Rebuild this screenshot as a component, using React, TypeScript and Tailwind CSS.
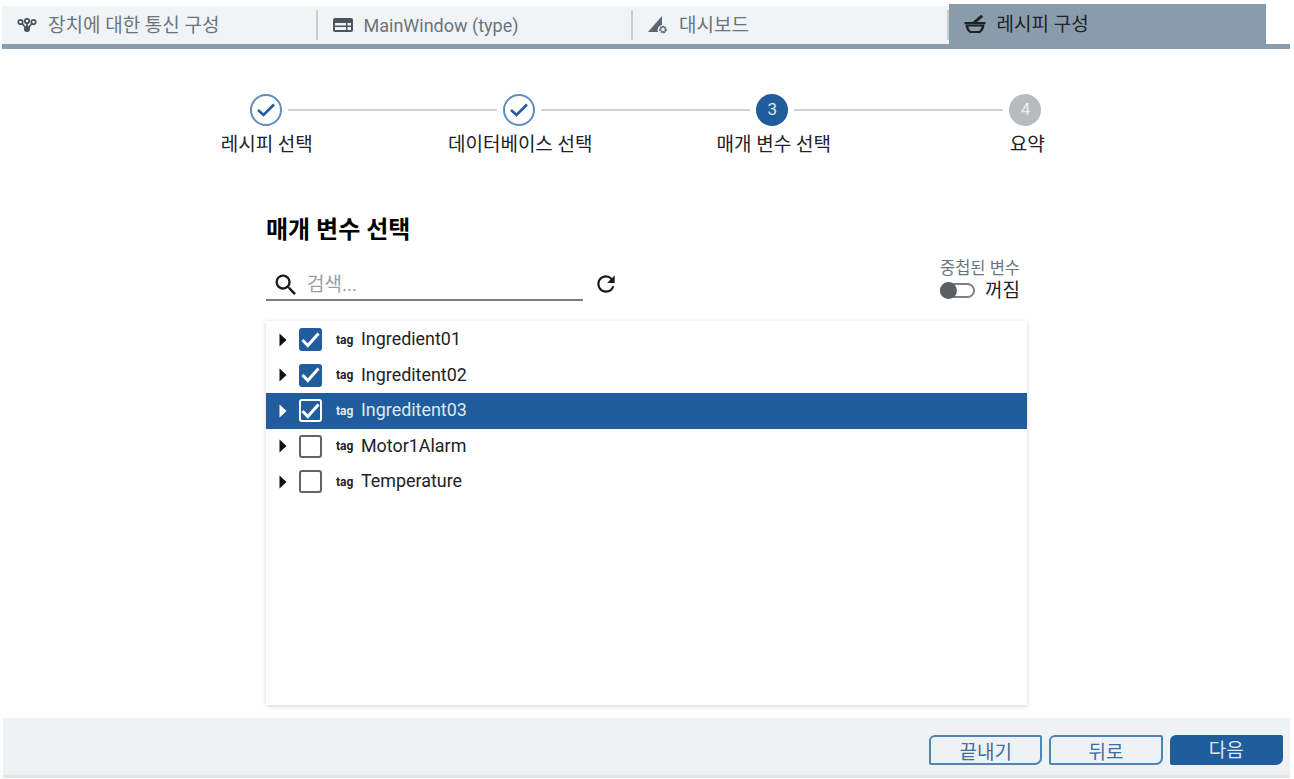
import { MdRefresh, MdSearch } from "react-icons/md";

const font = "font-['Roboto','Noto_Sans_CJK_KR',sans-serif]";

function NodesIcon() {
  return (
    <svg width="20" height="14" viewBox="0 0 20 14" fill="none" stroke="#4b5560" strokeWidth="1.8">
      <circle cx="3.5" cy="4" r="2.2" />
      <circle cx="16.5" cy="4" r="2.2" />
      <circle cx="10" cy="3" r="2.2" />
      <circle cx="10" cy="11" r="2.2" fill="#4b5560" />
      <path d="M5 5.5 8.5 9.5M15 5.5 11.5 9.5M10 5v4" />
    </svg>
  );
}

function WindowIcon() {
  return (
    <svg width="20" height="14" viewBox="0 0 20 14">
      <path fillRule="evenodd" fill="#4b5560" d="M2 0h16a2 2 0 0 1 2 2v10a2 2 0 0 1-2 2H2a2 2 0 0 1-2-2V2a2 2 0 0 1 2-2zM2 5v2.5h11V5zM2 9v3h11V9zM14.500 5v2.500H18V5zM14.500 9v3H18V9z" />
    </svg>
  );
}

function DashIcon() {
  return (
    <svg width="20" height="18" viewBox="0 0 20 18">
      <path fill="#5c6670" d="M14 0v9a5 5 0 0 0-4 7H0z" />
      <circle cx="15" cy="13.500" r="2.700" fill="none" stroke="#5c6670" strokeWidth="2.200" strokeDasharray="1.800 0.500" />
    </svg>
  );
}

function MortarIcon() {
  return (
    <svg width="22" height="20" viewBox="0 0 22 20" fill="#1d2226">
      <path d="M8 8.500 17 0.800l2.200 2L12.500 8.500z" />
      <rect x="0.500" y="8" width="21" height="2.200" />
      <path fillRule="evenodd" d="M1.500 10.500h19c0 4-2 7-4.500 8.500H6c-2.500-1.500-4.500-4.500-4.500-8.500zM4.300 12.500c.4 2 1.400 3.600 2.600 4.500h8.200c1.200-.9 2.200-2.500 2.600-4.500z" />
    </svg>
  );
}

function Tab({ icon, label, latin, active }: { icon: React.ReactNode; label: string; latin?: boolean; active?: boolean }) {
  if (active) {
    return (
      <div className="w-[317px] h-[40px] bg-[#8a9cab] flex items-center gap-[11px] pl-[15px] text-[19px] text-[#1d2226]">
        {icon}
        <span className="mt-[3px]">{label}</span>
      </div>
    );
  }
  return (
    <div className="w-[315.500px] h-[38px] bg-[#f1f4f7] flex items-center">
      <div className={`h-[30px] w-full flex items-center gap-[11px] pl-[15px] text-[#6b747c] border-r-2 border-[#c9ced2] ${latin ? "text-[18px]" : "text-[19px]"}`}>
        {icon}
        <span className={latin ? "" : "mt-[2px]"}>{label}</span>
      </div>
    </div>
  );
}

function DoneCircle() {
  return (
    <div className="w-[32px] h-[32px] shrink-0 rounded-full border-2 border-[#5f8dba] flex items-center justify-center">
      <svg width="18" height="14" viewBox="0 0 18 14" fill="none" stroke="#215c9c" strokeWidth="2.600">
        <path d="M1 7 6.500 12 17 1.500" />
      </svg>
    </div>
  );
}

function NumCircle({ n, active }: { n: number; active?: boolean }) {
  return (
    <div className={`w-[32px] h-[32px] shrink-0 rounded-full flex items-center justify-center text-[17px] ${active ? "bg-[#215c9c] text-[#dfe8f1]" : "bg-[#b8bcc0] text-[#eceef0]"}`}>
      {n}
    </div>
  );
}

function Line() {
  return <div className="flex-1 h-[2px] bg-[#ccd1d4]" />;
}

function CheckMark() {
  return (
    <svg width="19" height="16" viewBox="0 0 19 16" fill="none" stroke="#fff" strokeWidth="3">
      <path d="M1.500 8 6.800 13.500 17.500 1.500" />
    </svg>
  );
}

function Row({ name, checked, selected }: { name: string; checked?: boolean; selected?: boolean }) {
  return (
    <div className={`h-[35.500px] flex items-center pl-[13px] ${selected ? "bg-[#215c9c] text-[#dfe8f1]" : "text-[#1d2226]"}`}>
      <svg width="8" height="14" viewBox="0 0 8 14" className="shrink-0">
        <path d="M0.500 0.500 7.500 7 0.500 13.500z" fill={selected ? "#ffffff" : "#111111"} />
      </svg>
      {checked && !selected && (
        <div className="ml-[12px] w-[23px] h-[23px] rounded-[3px] bg-[#215c9c] flex items-center justify-center">
          <CheckMark />
        </div>
      )}
      {checked && selected && (
        <div className="ml-[12px] w-[23px] h-[23px] rounded-[3px] border-2 border-white flex items-center justify-center">
          <CheckMark />
        </div>
      )}
      {!checked && <div className="ml-[12px] w-[23px] h-[23px] rounded-[3px] border-2 border-[#5f6468]" />}
      <span className="ml-[14px] w-[25px] text-[12px] font-bold">tag</span>
      <span className="text-[17.900px]">{name}</span>
    </div>
  );
}

function FooterBtn({ label, primary }: { label: string; primary?: boolean }) {
  return (
    <button
      type="button"
      className={`w-[113.300px] h-[30px] pt-[2px] rounded-tl-[6px] rounded-bl-[2px] rounded-tr-[2px] rounded-br-[7px] text-[19px] ${primary ? "bg-[#215c9c] text-[#dfe8f1]" : "border-2 border-[#4f84b8] text-[#3f6f9f]"}`}
    >
      {label}
    </button>
  );
}

export default function App() {
  return (
    <div className={`w-[1294px] h-[779px] bg-white flex flex-col overflow-hidden ${font}`}>
      <div className="mt-[4px] ml-[2px] w-[1288px] h-[45px] flex flex-col">
        <div className="flex items-end h-[40px]">
          <Tab icon={<NodesIcon />} label="장치에 대한 통신 구성" />
          <Tab icon={<WindowIcon />} label="MainWindow (type)" latin />
          <Tab icon={<DashIcon />} label="대시보드" />
          <Tab icon={<MortarIcon />} label="레시피 구성" active />
        </div>
        <div className="h-[5px] bg-[#8a9cab]" />
      </div>

      <div className="mt-[45px] ml-[249.500px] w-[792px] flex items-center gap-[6px]">
        <DoneCircle />
        <Line />
        <DoneCircle />
        <Line />
        <NumCircle n={3} active />
        <Line />
        <NumCircle n={4} />
      </div>
      <div className="mt-[6px] ml-[140px] w-[1014px] grid grid-cols-4 text-center text-[19px] leading-[26px] text-[#1d2226]">
        <div>레시피 선택</div>
        <div>데이터베이스 선택</div>
        <div>매개 변수 선택</div>
        <div>요약</div>
      </div>

      <div className="ml-[266px] w-[761px] mt-[58px] flex flex-col">
        <h2 className="text-[24px] leading-[28px] font-bold text-black">매개 변수 선택</h2>
        <div className="mt-[14px] h-[43px] flex items-start">
          <div className="w-[317px] h-[30px] mt-[13px] border-b-2 border-[#7d8184] flex items-center">
            <MdSearch size={28} className="ml-[6px] text-[#16191c]" />
            <span className="ml-[7px] text-[19px] text-[#9aa0a5]">검색...</span>
          </div>
          <MdRefresh size={26} className="ml-[10px] mt-[13px] text-[#16191c]" />
          <div className="ml-auto mr-[7px] mt-[2px] flex flex-col items-end">
            <div className="text-[16.500px] leading-[18px] text-[#6b747c]">중첩된 변수</div>
            <div className="flex items-center gap-[10px] h-[25px]">
              <div className="relative w-[35px] h-[15px] rounded-full border-2 border-[#7d8184]">
                <div className="absolute -left-[2px] -top-[3px] w-[17px] h-[17px] rounded-full bg-[#5a5f64]" />
              </div>
              <span className="text-[19px] mt-[2px] text-[#1d2226]">꺼짐</span>
            </div>
          </div>
        </div>
        <div className="mt-[20px] h-[384px] pt-[1px] shadow-[0_1px_4px_rgba(0,0,0,0.18)]">
          <Row name="Ingredient01" checked />
          <Row name="Ingreditent02" checked />
          <Row name="Ingreditent03" checked selected />
          <Row name="Motor1Alarm" />
          <Row name="Temperature" />
        </div>
      </div>

      <div className="mt-[13px] ml-[3px] w-[1287px] h-[60px] bg-[#eef2f5] border-b-[3px] border-[#e4e6e8] flex items-start justify-end gap-[7px] pr-[7px] pt-[17px]">
        <FooterBtn label="끝내기" />
        <FooterBtn label="뒤로" />
        <FooterBtn label="다음" primary />
      </div>
    </div>
  );
}
